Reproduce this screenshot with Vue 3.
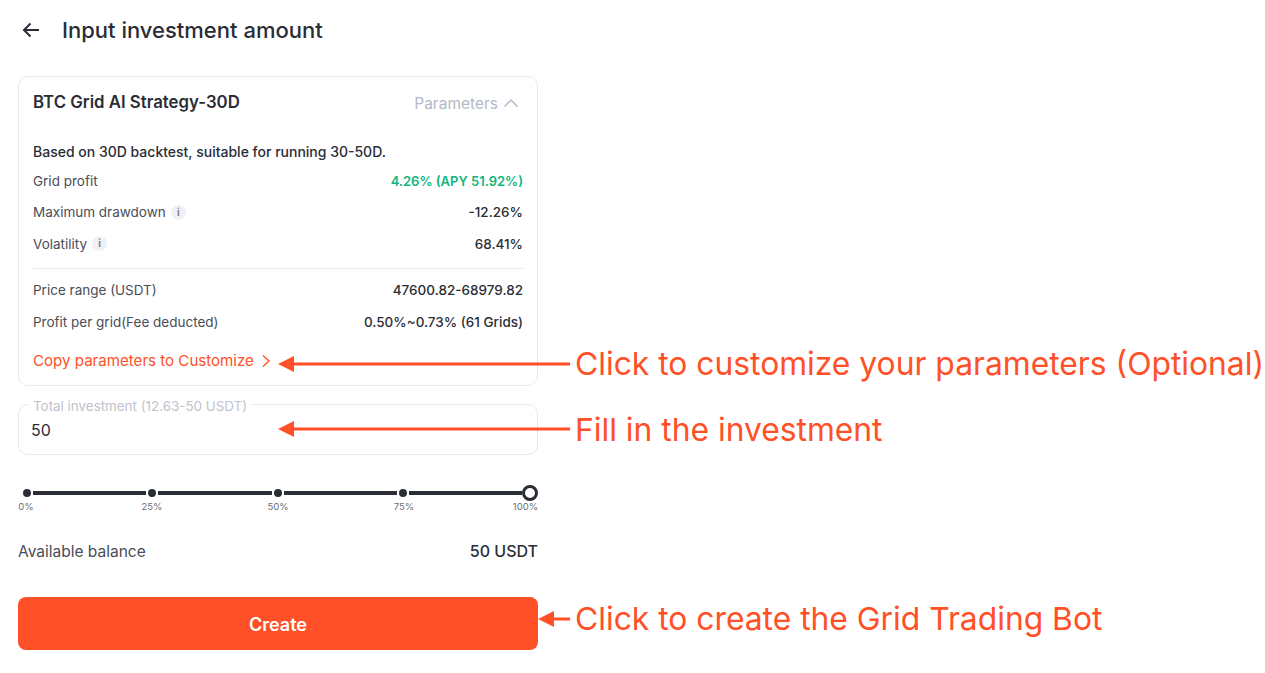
<script setup>
const statRows = [
  { label: 'Grid profit', value: '4.26% (APY 51.92%)', green: true },
  { label: 'Maximum drawdown', value: '-12.26%', info: true },
  { label: 'Volatility', value: '68.41%', info: true }
]
const paramRows = [
  { label: 'Price range (USDT)', value: '47600.82-68979.82' },
  { label: 'Profit per grid(Fee deducted)', value: '0.50%~0.73% (61 Grids)' }
]
const marks = ['0%', '25%', '50%', '75%', '100%']
const notes = [
  { text: 'Click to customize your parameters (Optional)', y: 363, lineY: 364, tip: 278 },
  { text: 'Fill in the investment', y: 429, lineY: 429, tip: 278 },
  { text: 'Click to create the Grid Trading Bot', y: 618, lineY: 619, tip: 538 }
]
</script>

<template>
  <div class="page">
    <header class="head">
      <svg class="back" width="20" height="20" viewBox="0 0 20 20" fill="none">
        <path d="M18 10H3M9.5 3.5L3 10l6.500 6.500" stroke="#2a2d36" stroke-width="2" />
      </svg>
      <h1>Input investment amount</h1>
    </header>

    <section class="card">
      <div class="card-top">
        <h2>BTC Grid AI Strategy-30D</h2>
        <div class="toggle">
          <span>Parameters</span>
          <svg width="16" height="10" viewBox="0 0 16 10" fill="none">
            <path d="M1.500 8.500L8 2l6.500 6.500" stroke="#b4b8c6" stroke-width="1.500" />
          </svg>
        </div>
      </div>
      <p class="desc">Based on 30D backtest, suitable for running 30-50D.</p>
      <div class="rows first">
        <div v-for="r in statRows" :key="r.label" class="row">
          <span class="lbl">{{ r.label }}<i v-if="r.info" class="info">i</i></span>
          <span class="val" :class="{ green: r.green }">{{ r.value }}</span>
        </div>
      </div>
      <div class="divider"></div>
      <div class="rows">
        <div v-for="r in paramRows" :key="r.label" class="row">
          <span class="lbl">{{ r.label }}</span>
          <span class="val">{{ r.value }}</span>
        </div>
      </div>
      <div class="copy">
        <span>Copy parameters to Customize</span>
        <svg width="10" height="14" viewBox="0 0 10 14" fill="none">
          <path d="M2 1.500L8 7l-6 5.500" stroke="#ff5027" stroke-width="1.400" />
        </svg>
      </div>
    </section>

    <div class="field">
      <label>Total investment (12.63-50 USDT)</label>
      <span class="amount">50</span>
    </div>

    <div class="slider">
      <div class="track">
        <template v-for="(m, i) in marks" :key="m">
          <span class="dot" :class="{ last: i === 4 }"></span>
          <span v-if="i < 4" class="seg"></span>
        </template>
      </div>
      <div class="marks">
        <span v-for="m in marks" :key="m">{{ m }}</span>
      </div>
    </div>

    <div class="balance">
      <span>Available balance</span>
      <strong>50 USDT</strong>
    </div>

    <button class="create">Create</button>

    <div
      v-for="n in notes"
      :key="n.text"
      class="note"
      :style="{ left: n.tip + 'px', top: n.lineY - 30 + 'px' }"
    >
      <svg :width="570 - n.tip" height="18" viewBox="0 0 292 18" preserveAspectRatio="xMinYMid slice" fill="none" class="arrow">
        <path d="M0 9L16 1v16z" fill="#ff5027" />
        <rect x="14" y="7.500" width="278" height="3" fill="#ff5027" />
      </svg>
      <span class="note-text" :style="{ top: n.y - n.lineY + 'px' }">{{ n.text }}</span>
    </div>
  </div>
</template>

<style scoped>
.page {
  position: relative;
  width: 1265px;
  height: 673px;
  overflow: hidden;
  box-sizing: border-box;
  padding: 0 0 0 18px;
  background: #fff;
  font-family: Inter, "Noto Sans", sans-serif;
  color: #2a2d36;
}
.head {
  display: flex;
  align-items: center;
  height: 60px;
  gap: 21px;
  padding-left: 3px;
}
.back { flex: none; }
h1 {
  margin: 0;
  font-size: 22px;
  font-weight: 500;
}
.card {
  box-sizing: border-box;
  width: 520px;
  height: 310px;
  margin-top: 16px;
  padding: 0 14px;
  border: 1px solid #e6e8ee;
  border-radius: 10px;
}
.card-top {
  display: flex;
  justify-content: space-between;
  align-items: center;
  height: 50px;
}
h2 {
  margin: 0;
  font-size: 16.800px;
  font-weight: 600;
}
.toggle {
  display: flex;
  align-items: center;
  gap: 5px;
  padding: 2px 4px 0 0;
  font-size: 15.500px;
  color: #b4b8c6;
}
.desc {
  margin: 15px 0 0;
  font-size: 14px;
  line-height: 20px;
  font-weight: 500;
}
.rows { display: flex; flex-direction: column; }
.rows.first { margin-top: 3px; }
.row {
  display: flex;
  justify-content: space-between;
  align-items: center;
  height: 31.500px;
  font-size: 13.500px;
}
.lbl { display: flex; align-items: center; color: #4a4d57; }
.val { font-weight: 500; }
.green { color: #10b67a; font-size: 13px; font-weight: 600; }
.info {
  width: 15px;
  height: 15px;
  margin-left: 5px;
  border-radius: 50%;
  background: #f0f1f6;
  color: #7c808c;
  font-size: 10px;
  font-style: normal;
  font-weight: 700;
  line-height: 15px;
  text-align: center;
}
.divider {
  height: 1px;
  margin-top: 8px;
  margin-bottom: 6px;
  background: #e6e8ee;
}
.copy {
  display: flex;
  align-items: center;
  gap: 7px;
  margin-top: 11px;
  height: 24px;
  font-size: 15.100px;
  color: #ff5027;
}
.field {
  position: relative;
  box-sizing: border-box;
  width: 520px;
  height: 51px;
  margin-top: 18px;
  padding: 15px 12px 0;
  border: 1px solid #e6e8ee;
  border-radius: 10px;
}
.field label {
  position: absolute;
  left: 10px;
  top: -7px;
  padding: 0 4px;
  background: #fff;
  font-size: 13.400px;
  line-height: 16px;
  color: #bfc2cd;
}
.amount { font-size: 16px; line-height: 20px; }
.slider {
  width: 520px;
  margin-top: 30px;
}
.track {
  display: flex;
  align-items: center;
  height: 16px;
  padding: 0 0 0 5px;
}
.dot {
  flex: none;
  width: 8px;
  height: 8px;
  border-radius: 50%;
  background: #2a2d36;
}
.dot.last {
  box-sizing: border-box;
  width: 16px;
  height: 16px;
  border: 3px solid #2a2d36;
  background: #fff;
}
.seg {
  flex: 1;
  height: 4px;
  margin: 0 2px;
  background: #2a2d36;
}
.seg:nth-last-child(2) { margin-right: 0; }
.marks {
  display: flex;
  justify-content: space-between;
  padding-left: 8px;
  font-size: 9.500px;
  line-height: 12px;
  color: #6a6d77;
}
.marks span {
  display: flex;
  justify-content: center;
  width: 0;
  white-space: nowrap;
}
.marks span:last-child {
  justify-content: flex-end;
  width: 8px;
}
.balance {
  display: flex;
  justify-content: space-between;
  align-items: center;
  width: 520px;
  height: 24px;
  margin-top: 26px;
  font-size: 15.500px;
  color: #4a4d57;
}
.balance strong { font-size: 16px; font-weight: 500; color: #2a2d36; }
.create {
  display: block;
  width: 520px;
  height: 53px;
  margin-top: 34px;
  padding: 2px 0 0;
  border: 0;
  border-radius: 8px;
  background: #ff5027;
  color: #fff;
  font: 600 18px Inter, sans-serif;
}
.note {
  position: absolute;
  display: flex;
  align-items: center;
  height: 60px;
}
.arrow { flex: none; }
.note-text {
  position: relative;
  margin-left: 5px;
  font-size: 31.800px;
  color: #ff5027;
  white-space: nowrap;
}
</style>
